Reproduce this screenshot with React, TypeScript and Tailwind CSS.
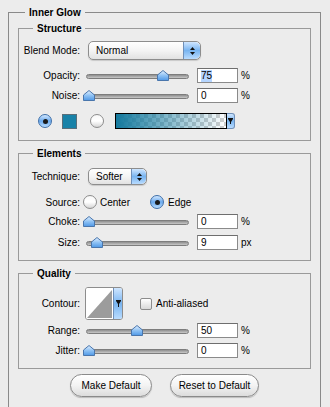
const FONT = "font-['Liberation_Sans',Arial,sans-serif]";

function Thumb({ x }: { x: number }) {
  return (
    <svg
      width="12"
      height="11"
      viewBox="0 0 12 11"
      className="absolute top-[1px]"
      style={{ left: x }}
    >
      <defs>
        <linearGradient id="th" x1="0" y1="0" x2="0" y2="1">
          <stop offset="0" stopColor="#e4f1ff" />
          <stop offset="0.5" stopColor="#8fc2f4" />
          <stop offset="1" stopColor="#4f98e6" />
        </linearGradient>
      </defs>
      <path
        d="M6 0.5 L11.5 5 L11.5 10.5 L0.5 10.5 L0.5 5 Z"
        fill="url(#th)"
        stroke="#4a76ac"
        strokeWidth="1"
      />
    </svg>
  );
}

function Slider({ at }: { at: number }) {
  return (
    <div className="relative ml-[4px] h-[14px] w-[108px] shrink-0">
      <div className="absolute left-[2px] right-[3px] top-[5px] h-[5px] rounded-full border border-[#7d7d7d] bg-gradient-to-b from-[#8e8e8e] to-[#c9c9c9]" />
      <Thumb x={at} />
    </div>
  );
}

function Field({ value, unit, sel }: { value: string; unit: string; sel?: boolean }) {
  return (
    <>
      <div className="ml-[5px] flex h-[15px] w-[41px] items-center border border-[#8a8a8a] border-t-[#6e6e6e] bg-white pl-[3px] text-[10px] leading-[12px]">
        <span className={sel ? "bg-[#b5d5ff]" : ""}>{value}</span>
      </div>
      <span className="ml-[3px] text-[10px]">{unit}</span>
    </>
  );
}

function Label({ children }: { children: React.ReactNode }) {
  return <span className="w-[61px] shrink-0 text-right text-[10px]">{children}</span>;
}

function SliderRow({ label, at, value, unit, sel, mt }: { label: string; at: number; value: string; unit: string; sel?: boolean; mt: string }) {
  return (
    <div className={`flex h-[15px] items-center ${mt}`}>
      <Label>{label}</Label>
      <Slider at={at} />
      <Field value={value} unit={unit} sel={sel} />
    </div>
  );
}

function Stepper({ w }: { w: string }) {
  return (
    <div className={`flex h-full ${w} flex-col items-center justify-center gap-[2px] rounded-r-[5px] border-l border-[#6f8fb8] bg-gradient-to-b from-[#cfe6ff] via-[#78b4f0] to-[#b9dcff]`}>
      <svg width="5" height="3" viewBox="0 0 5 3"><path d="M2.5 0 L5 3 L0 3 Z" fill="#111" /></svg>
      <svg width="5" height="3" viewBox="0 0 5 3"><path d="M0 0 L5 0 L2.5 3 Z" fill="#111" /></svg>
    </div>
  );
}

function Select({ text, w, h, sw }: { text: string; w: string; h: string; sw: string }) {
  return (
    <div className={`ml-[8px] flex ${h} ${w} items-stretch overflow-hidden rounded-[5px] border border-[#8d8d8d] bg-gradient-to-b from-white via-[#f4f4f4] to-[#e2e2e2] shadow-[0_1px_1px_rgba(0,0,0,0.15)]`}>
      <span className="flex flex-1 items-center pl-[7px] text-[10px]">{text}</span>
      <Stepper w={sw} />
    </div>
  );
}

function Radio({ on, ml }: { on?: boolean; ml: string }) {
  return on ? (
    <div className={`${ml} flex h-[14px] w-[14px] shrink-0 items-center justify-center rounded-full border border-[#3f6fa8] bg-gradient-to-b from-[#d2e8ff] via-[#6aa9ec] to-[#b7dcff]`}>
      <div className="h-[5px] w-[5px] rounded-full bg-[#1a1a1a]" />
    </div>
  ) : (
    <div className={`${ml} h-[14px] w-[14px] shrink-0 rounded-full border border-[#8c8c8c] bg-gradient-to-b from-[#f8f8f8] via-white to-[#d6d6d6]`} />
  );
}

function Group({ title, className, children }: { title: string; className: string; children: React.ReactNode }) {
  return (
    <fieldset className={`mx-[9px] border border-[#9a9a9a] ${className}`}>
      <legend className="ml-[14px] px-[4px] text-[10px] font-bold leading-[13px]">{title}</legend>
      {children}
    </fieldset>
  );
}

export default function App() {
  return (
    <div className={`h-[407px] w-[330px] overflow-hidden bg-[#ececec] pl-[8px] pt-[6px] text-black ${FONT}`}>
      <fieldset className="h-[420px] w-[313px] border border-[#8a8a8a]">
        <legend className="ml-[16px] px-[4px] text-[10px] font-bold leading-[13px]">Inner Glow</legend>

        <Group title="Structure" className="mt-[3px] pb-[11px]">
          <div className="mt-[6px] flex h-[19px] items-center">
            <Label>Blend Mode:</Label>
            <Select text="Normal" w="w-[113px]" h="h-[19px]" sw="w-[17px]" />
          </div>
          <SliderRow label="Opacity:" at={73} value="75" unit="%" sel mt="mt-[8px]" />
          <SliderRow label="Noise:" at={-1} value="0" unit="%" mt="mt-[5px]" />
          <div className="mt-[10px] flex h-[16px] items-center">
            <Radio on ml="ml-[19px]" />
            <div className="ml-[10px] h-[15px] w-[15px] border border-[#5a6f7a] bg-[#1882a8]" />
            <Radio ml="ml-[13px]" />
            <div className="ml-[11px] flex h-[16px] w-[120px] items-stretch">
              <div className="flex-1 border border-black bg-[repeating-conic-gradient(#cfcfcf_0_25%,#ffffff_0_50%)] bg-[length:8px_8px]">
                <div className="h-full w-full bg-gradient-to-r from-[#157a9e] via-[#157a9e80] to-transparent" />
              </div>
              <div className="flex w-[8px] items-center justify-center rounded-r-[3px] border border-l-0 border-[#6f8fb8] bg-gradient-to-b from-[#cfe6ff] via-[#78b4f0] to-[#b9dcff]">
                <svg width="5" height="6" viewBox="0 0 5 6"><path d="M0 0 L5 0 L5 1 L3 4 L3 6 L2 6 L2 4 L0 1 Z" fill="#111" /></svg>
              </div>
            </div>
          </div>
        </Group>

        <Group title="Elements" className="mt-[6px] pb-[10px]">
          <div className="mt-[8px] flex h-[17px] items-center">
            <Label>Technique:</Label>
            <Select text="Softer" w="w-[59px]" h="h-[17px]" sw="w-[15px]" />
          </div>
          <div className="mt-[10px] flex h-[14px] items-center text-[10px]">
            <Label>Source:</Label>
            <Radio ml="ml-[3px]" />
            <span className="ml-[3px]">Center</span>
            <Radio on ml="ml-[20px]" />
            <span className="ml-[4px]">Edge</span>
          </div>
          <SliderRow label="Choke:" at={-1} value="0" unit="%" mt="mt-[5px]" />
          <SliderRow label="Size:" at={7} value="9" unit="px" mt="mt-[6px]" />
        </Group>

        <Group title="Quality" className="mt-[6px] pb-[10px]">
          <div className="mt-[7px] flex h-[33px] items-center">
            <Label>Contour:</Label>
            <div className="ml-[5px] flex h-[33px] w-[38px] overflow-hidden rounded-[3px] border border-[#8d8d8d] bg-white">
              <svg width="27" height="31" viewBox="0 0 27 31" className="mt-[0px]">
                <rect x="0" y="0" width="27" height="31" fill="#fff" />
                <path d="M1 30 L26 2 L26 30 Z" fill="#9c9c9c" />
              </svg>
              <div className="flex flex-1 items-center justify-center border-l border-[#6f8fb8] bg-gradient-to-b from-[#cfe6ff] via-[#78b4f0] to-[#b9dcff]">
                <svg width="5" height="7" viewBox="0 0 5 7"><path d="M0 0 L5 0 L5 1 L3 4 L3 7 L2 7 L2 4 L0 1 Z" fill="#111" /></svg>
              </div>
            </div>
            <div className="ml-[17px] h-[12px] w-[12px] rounded-[2px] border border-[#8c8c8c] bg-gradient-to-b from-white to-[#d9d9d9]" />
            <span className="ml-[4px] text-[10px]">Anti-aliased</span>
          </div>
          <SliderRow label="Range:" at={47} value="50" unit="%" mt="mt-[3px]" />
          <SliderRow label="Jitter:" at={-1} value="0" unit="%" mt="mt-[5px]" />
        </Group>

        <div className="mt-[5px] flex justify-center gap-[18px]">
          <button className="h-[23px] w-[82px] rounded-full border border-[#8a8a8a] bg-gradient-to-b from-white via-[#f3f3f3] to-[#dcdcdc] text-[10px] shadow-[0_1px_1px_rgba(0,0,0,0.2)]">
            Make Default
          </button>
          <button className="h-[23px] w-[89px] rounded-full border border-[#8a8a8a] bg-gradient-to-b from-white via-[#f3f3f3] to-[#dcdcdc] text-[10px] shadow-[0_1px_1px_rgba(0,0,0,0.2)]">
            Reset to Default
          </button>
        </div>
      </fieldset>
    </div>
  );
}
